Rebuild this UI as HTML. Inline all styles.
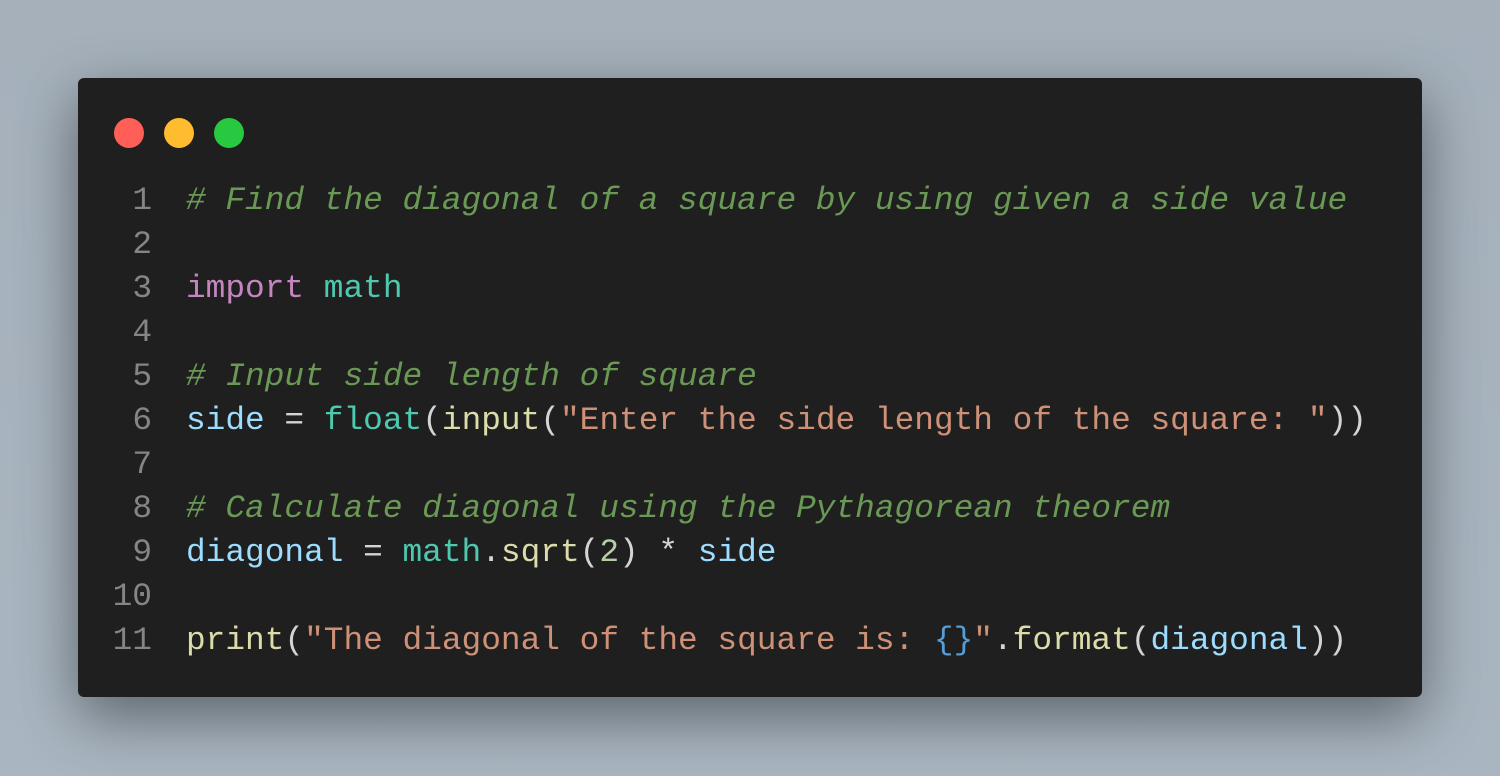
<!DOCTYPE html>
<html><head><meta charset="utf-8"><style>
html,body{margin:0;padding:0;}
body{width:1500px;height:776px;background:linear-gradient(180deg,#a5b0bb,#a9b5c0);position:relative;overflow:hidden;font-family:"Liberation Mono",monospace;}
.win{position:absolute;left:78px;top:78px;width:1344px;height:619px;background:#1f1f1f;border-radius:6px;box-shadow:0 20px 60px rgba(0,0,0,0.45);}
.dot{position:absolute;top:40px;width:30px;height:30px;border-radius:50%;}
.code{position:absolute;left:0;top:101px;font-size:32.8px;line-height:44px;white-space:pre;color:#d4d4d4;}
.ln{display:inline-block;width:74px;text-align:right;color:#858585;margin-right:34px;}
.c{color:#6a9955;font-style:italic}.k{color:#c586c0}.t{color:#4ec9b0}.v{color:#9cdcfe}.s{color:#ce9178}.f{color:#dcdcaa}.n{color:#b5cea8}.b{color:#569cd6}
</style></head><body>
<div class="win">
<div class="dot" style="left:36px;background:#ff5f57"></div>
<div class="dot" style="left:86px;background:#febc2e"></div>
<div class="dot" style="left:136px;background:#28c840"></div>
<div class="code"><div><span class="ln">1</span><span class="c"># Find the diagonal of a square by using given a side value</span></div><div><span class="ln">2</span></div><div><span class="ln">3</span><span class="k">import</span> <span class="t">math</span></div><div><span class="ln">4</span></div><div><span class="ln">5</span><span class="c"># Input side length of square</span></div><div><span class="ln">6</span><span class="v">side</span> = <span class="t">float</span>(<span class="f">input</span>(<span class="s">"Enter the side length of the square: "</span>))</div><div><span class="ln">7</span></div><div><span class="ln">8</span><span class="c"># Calculate diagonal using the Pythagorean theorem</span></div><div><span class="ln">9</span><span class="v">diagonal</span> = <span class="t">math</span>.<span class="f">sqrt</span>(<span class="n">2</span>) * <span class="v">side</span></div><div><span class="ln">10</span></div><div><span class="ln">11</span><span class="f">print</span>(<span class="s">"The diagonal of the square is: </span><span class="b">{}</span><span class="s">"</span>.<span class="f">format</span>(<span class="v">diagonal</span>))</div></div>
</div>
</body></html>
